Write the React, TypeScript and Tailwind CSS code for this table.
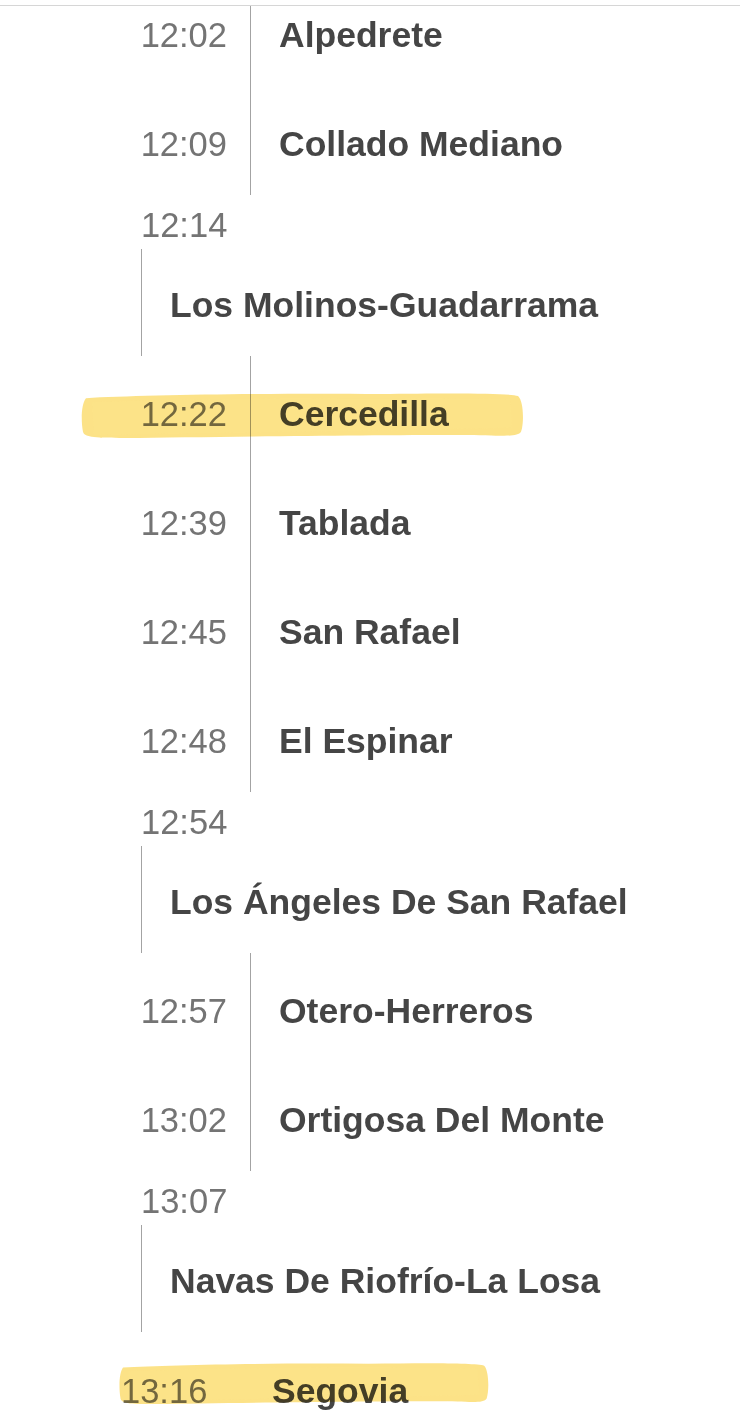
type Stop = { time: string; name: string; hl?: boolean };

const FONT = { fontFamily: '"Liberation Sans", Arial, sans-serif' };

function Marker({ className }: { className: string }) {
  return (
    <svg
      className={`pointer-events-none absolute mix-blend-multiply ${className}`}
      viewBox="0 0 445 45"
      preserveAspectRatio="none"
    >
      <path
        d="M6 6 C 60 3 190 1 300 2 C 370 1 428 1 438 4 C 444 9 444 32 441 39 C 437 45 420 42 380 42 C 280 42 130 44 45 45 C 18 45 4 45 3 39 C 1 29 1 12 6 6 Z"
        fill="#fcdd72"
        fillOpacity="0.85"
      />
      <path
        d="M12 10 C 120 6 300 5 430 7 L 432 35 C 300 38 120 40 14 42 Z"
        fill="#fde68a"
        fillOpacity="0.35"
      />
    </svg>
  );
}

function StopRow({ time, name, hl }: Stop) {
  return (
    <div className="relative flex h-[109px]">
      <div className="flex w-[227px] items-center justify-end pt-[9px] text-[34.5px] text-[#747474]">
        {time}
      </div>
      <div className="ml-[23px] flex flex-1 items-center border-l border-[#a3a3a3] pl-[28px] pt-[9px] text-[35.5px] font-bold text-[#454545]">
        {name}
      </div>
      {hl && <Marker className="left-[80px] top-[36px] h-[46px] w-[445px]" />}
    </div>
  );
}

function Block({ stops }: { stops: Stop[] }) {
  return (
    <div>
      {stops.map((s) => (
        <StopRow key={s.time} {...s} />
      ))}
    </div>
  );
}

function Detached({ time, name }: Stop) {
  return (
    <div>
      <div className="flex h-[54px] items-center pl-[141px] pt-[8px] text-[34.5px] text-[#747474]">
        {time}
      </div>
      <div className="ml-[141px] flex h-[107px] items-center border-l border-[#a3a3a3] pl-[28px] pt-[7px] text-[35.5px] font-bold text-[#454545]">
        {name}
      </div>
    </div>
  );
}

export default function App() {
  return (
    <div className="min-h-[1421px] bg-white" style={FONT}>
      <div className="h-[5px]" />
      <div className="h-px bg-[#d6d6d6]" />
      <div className="h-[1415px] overflow-hidden">
        <div className="-mt-[29px]">
          <Block
            stops={[
              { time: '12:02', name: 'Alpedrete' },
              { time: '12:09', name: 'Collado Mediano' },
            ]}
          />
          <Detached time="12:14" name="Los Molinos-Guadarrama" />
          <Block
            stops={[
              { time: '12:22', name: 'Cercedilla', hl: true },
              { time: '12:39', name: 'Tablada' },
              { time: '12:45', name: 'San Rafael' },
              { time: '12:48', name: 'El Espinar' },
            ]}
          />
          <Detached time="12:54" name="Los Ángeles De San Rafael" />
          <Block
            stops={[
              { time: '12:57', name: 'Otero-Herreros' },
              { time: '13:02', name: 'Ortigosa Del Monte' },
            ]}
          />
          <Detached time="13:07" name="Navas De Riofrío-La Losa" />
          <div className="relative flex h-[109px] items-center pl-[121px] pt-[10px]">
            <div className="w-[151px] text-[34.5px] text-[#747474]">13:16</div>
            <div className="text-[35.5px] font-bold text-[#454545]">Segovia</div>
            <Marker className="left-[118px] top-[30px] h-[42px] w-[372px]" />
          </div>
        </div>
      </div>
    </div>
  );
}
